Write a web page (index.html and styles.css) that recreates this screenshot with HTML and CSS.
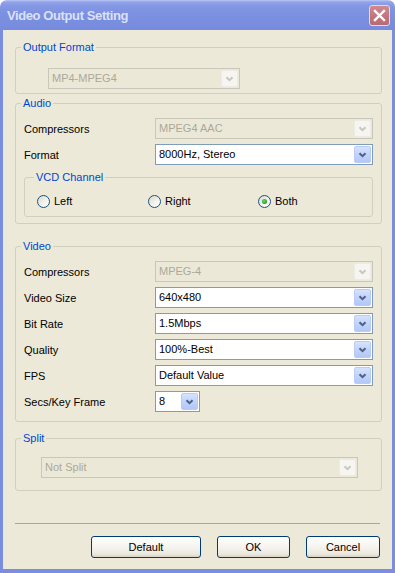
FILE: index.html
```html
<!DOCTYPE html>
<html lang="en">
<head>
    <meta charset="UTF-8">
    <title>Video Output Setting</title>
    <link rel="stylesheet" href="styles.css">
</head>
<body>
    <div class="window">
        <div class="titlebar">
            <span class="title">Video Output Setting</span>
            <span class="close-btn">
                <svg width="13" height="13" viewBox="0 0 13 13"><path d="M2 2 L11 11 M11 2 L2 11" stroke="#fff" stroke-width="2.4" stroke-linecap="square"/></svg>
            </span>
        </div>

        <div class="client">
            <fieldset class="group group-output">
                <legend>Output Format</legend>
                <div class="combo disabled combo-output">
                    <span class="combo-text">MP4-MPEG4</span>
                    <span class="combo-btn"><svg width="9" height="6" viewBox="0 0 9 6"><path d="M1.5 1.2 L4.5 4.2 L7.5 1.2" fill="none" stroke-width="2"/></svg></span>
                </div>
            </fieldset>

            <fieldset class="group group-audio">
                <legend>Audio</legend>
                <div class="form-grid">
                    <label>Compressors</label>
                    <div class="combo disabled">
                        <span class="combo-text">MPEG4 AAC</span>
                        <span class="combo-btn"><svg width="9" height="6" viewBox="0 0 9 6"><path d="M1.5 1.2 L4.5 4.2 L7.5 1.2" fill="none" stroke-width="2"/></svg></span>
                    </div>
                    <label>Format</label>
                    <div class="combo">
                        <span class="combo-text">8000Hz, Stereo</span>
                        <span class="combo-btn"><svg width="9" height="6" viewBox="0 0 9 6"><path d="M1.5 1.2 L4.5 4.2 L7.5 1.2" fill="none" stroke-width="2"/></svg></span>
                    </div>
                </div>

                <fieldset class="group group-channel">
                    <legend>VCD Channel</legend>
                    <div class="radio-row">
                        <div class="radio"><span class="radio-dot"></span>Left</div>
                        <div class="radio"><span class="radio-dot"></span>Right</div>
                        <div class="radio"><span class="radio-dot checked"></span>Both</div>
                    </div>
                </fieldset>
            </fieldset>

            <fieldset class="group group-video">
                <legend>Video</legend>
                <div class="form-grid">
                    <label>Compressors</label>
                    <div class="combo disabled">
                        <span class="combo-text">MPEG-4</span>
                        <span class="combo-btn"><svg width="9" height="6" viewBox="0 0 9 6"><path d="M1.5 1.2 L4.5 4.2 L7.5 1.2" fill="none" stroke-width="2"/></svg></span>
                    </div>
                    <label>Video Size</label>
                    <div class="combo">
                        <span class="combo-text">640x480</span>
                        <span class="combo-btn"><svg width="9" height="6" viewBox="0 0 9 6"><path d="M1.5 1.2 L4.5 4.2 L7.5 1.2" fill="none" stroke-width="2"/></svg></span>
                    </div>
                    <label>Bit Rate</label>
                    <div class="combo">
                        <span class="combo-text">1.5Mbps</span>
                        <span class="combo-btn"><svg width="9" height="6" viewBox="0 0 9 6"><path d="M1.5 1.2 L4.5 4.2 L7.5 1.2" fill="none" stroke-width="2"/></svg></span>
                    </div>
                    <label>Quality</label>
                    <div class="combo">
                        <span class="combo-text">100%-Best</span>
                        <span class="combo-btn"><svg width="9" height="6" viewBox="0 0 9 6"><path d="M1.5 1.2 L4.5 4.2 L7.5 1.2" fill="none" stroke-width="2"/></svg></span>
                    </div>
                    <label>FPS</label>
                    <div class="combo">
                        <span class="combo-text">Default Value</span>
                        <span class="combo-btn"><svg width="9" height="6" viewBox="0 0 9 6"><path d="M1.5 1.2 L4.5 4.2 L7.5 1.2" fill="none" stroke-width="2"/></svg></span>
                    </div>
                    <label>Secs/Key Frame</label>
                    <div class="combo combo-small">
                        <span class="combo-text">8</span>
                        <span class="combo-btn"><svg width="9" height="6" viewBox="0 0 9 6"><path d="M1.5 1.2 L4.5 4.2 L7.5 1.2" fill="none" stroke-width="2"/></svg></span>
                    </div>
                </div>
            </fieldset>

            <fieldset class="group group-split">
                <legend>Split</legend>
                <div class="combo disabled combo-split">
                    <span class="combo-text">Not Split</span>
                    <span class="combo-btn"><svg width="9" height="6" viewBox="0 0 9 6"><path d="M1.5 1.2 L4.5 4.2 L7.5 1.2" fill="none" stroke-width="2"/></svg></span>
                </div>
            </fieldset>

            <div class="separator"></div>

            <div class="button-row">
                <button class="btn btn-default">Default</button>
                <button class="btn btn-ok">OK</button>
                <button class="btn btn-cancel">Cancel</button>
            </div>
        </div>
    </div>
</body>
</html>
```

FILE: styles.css
```css
:root {
    --face: #ece9d8;
    --frame: #7b8ddf;
    --group-border: #d0d0bf;
    --group-text: #0046d5;
    --combo-border: #7f9db9;
    --disabled-text: #aca899;
    --disabled-border: #c9c7ba;
}

* {
    margin: 0;
    padding: 0;
    box-sizing: border-box;
}

body {
    background: #fff;
    font-family: "Liberation Sans", Arial, sans-serif;
    font-size: 11px;
    color: #000;
}

.window {
    width: 395px;
    height: 573px;
    display: flex;
    flex-direction: column;
}

.titlebar {
    height: 30px;
    flex: none;
    display: flex;
    align-items: center;
    justify-content: space-between;
    padding: 0 5px 0 7px;
    border-radius: 7px 7px 0 0;
    background: linear-gradient(to bottom, #b9c6f3 0, #92a4eb 2px, #8397e4 6px, #7c90e1 50%, #778bde 100%);
}

.title {
    font-size: 13px;
    font-weight: bold;
    letter-spacing: -0.4px;
    color: #d9e1f8;
    padding-top: 1px;
}

.close-btn {
    width: 21px;
    height: 21px;
    display: flex;
    align-items: center;
    justify-content: center;
    border: 1px solid #d9dcf2;
    border-radius: 3px;
    background: linear-gradient(to bottom, #d08a8f, #c0747a 60%, #b86c72);
}

.client {
    flex: 1;
    background: var(--face);
    border: solid var(--frame);
    border-width: 0 3px 4px 3px;
    padding: 11px 10px 10px 12px;
    display: flex;
    flex-direction: column;
}

/* group boxes */
.group {
    border: 1px solid var(--group-border);
    border-radius: 3px;
    padding: 8px 8px 6px 8px;
}

.group legend {
    color: var(--group-text);
    line-height: 13px;
    padding: 0 2px;
    margin-left: -3px;
}

.group-output {
    padding: 14px 8px 4px 8px;
}

.group-audio {
    margin-top: 3px;
}

.group-channel {
    margin-top: 6px;
    padding: 11px 8px 8px 12px;
}

.group-video {
    margin-top: 16px;
    padding-bottom: 9px;
}

.group-split {
    margin-top: 10px;
    padding: 12px 8px 12px 8px;
}

.form-grid {
    display: grid;
    grid-template-columns: 131px 218px;
    row-gap: 5px;
    align-items: center;
}

.form-grid label {
    padding-top: 1px;
}

/* combo boxes */
.combo {
    height: 21px;
    display: flex;
    border: 1px solid var(--combo-border);
    background: #fff;
    padding: 1px;
}

.combo-text {
    flex: 1;
    line-height: 17px;
    padding-left: 2px;
    white-space: nowrap;
}

.combo-btn {
    width: 17px;
    display: flex;
    align-items: center;
    justify-content: center;
    border: 1px solid #b9cbf6;
    border-radius: 2px;
    background: linear-gradient(to bottom, #d6e2fd, #c1d3fb 50%, #b3c7f9);
    stroke: #4d6185;
}

.combo.disabled {
    border-color: var(--disabled-border);
    background: #ebe8d8;
    color: var(--disabled-text);
}

.combo.disabled .combo-btn {
    border-color: #ecebe6;
    background: #f6f5f1;
    stroke: #c9c7ba;
}

.combo-output {
    width: 192px;
    margin-left: 24px;
}

.combo-small {
    width: 45px;
}

.combo-split {
    width: 317px;
    margin-left: 17px;
}

/* radio buttons */
.radio-row {
    display: grid;
    grid-template-columns: 111px 110px auto;
}

.radio {
    display: flex;
    align-items: center;
    gap: 4px;
    line-height: 13px;
}

.radio-dot {
    width: 13px;
    height: 13px;
    border: 1px solid #1c5180;
    border-radius: 50%;
    background: linear-gradient(135deg, #dcd8cd, #f4f3ee 60%, #fff);
    display: flex;
    align-items: center;
    justify-content: center;
}

.radio-dot.checked::after {
    content: "";
    width: 5px;
    height: 5px;
    border-radius: 50%;
    background: radial-gradient(circle at 40% 40%, #6fd36f, #21a121 70%);
}

/* bottom */
.separator {
    margin-top: 32px;
    margin-right: 2px;
    border-top: 1px solid #aca899;
}

.button-row {
    margin-top: 12px;
    display: flex;
    justify-content: flex-end;
    gap: 16px;
    padding-right: 2px;
}

.btn {
    height: 22px;
    font-family: inherit;
    font-size: 11px;
    color: #000;
    border: 1px solid #003c74;
    border-radius: 3px;
    background: linear-gradient(to bottom, #fff, #f5f4ef 50%, #ebe8dd 85%, #d8d2c6);
}

.btn-default {
    width: 110px;
}

.btn-ok {
    width: 73px;
}

.btn-cancel {
    width: 74px;
}
```
